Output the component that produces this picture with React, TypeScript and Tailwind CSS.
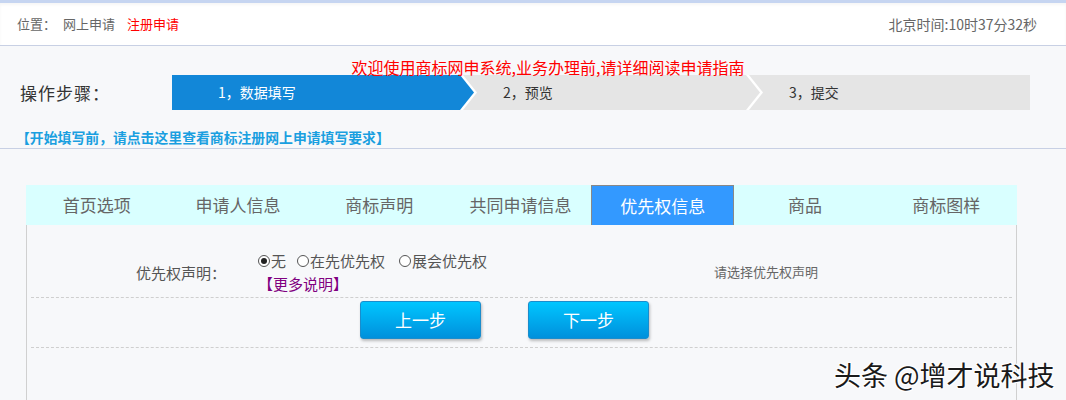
import React from 'react';

const font = { fontFamily: '"Noto Sans CJK SC", "Noto Sans", sans-serif' };

const tabs = ['首页选项', '申请人信息', '商标声明', '共同申请信息', '优先权信息', '商品', '商标图样'];

const steps = [
  { label: '1，数据填写', active: true, w: 'w-[288px] pl-[46px]' },
  { label: '2，预览', active: false, w: 'w-[286px] pl-[43px]' },
  { label: '3，提交', active: false, w: 'w-[284px] pl-[43px]' },
];

const Radio = ({ checked }: { checked?: boolean }) => (
  <span className="inline-flex items-center justify-center w-[12px] h-[12px] rounded-full border border-[#555] bg-white mr-[1px]">
    {checked && <span className="w-[6px] h-[6px] rounded-full bg-[#222]" />}
  </span>
);

const StepArrow = ({ fill }: { fill: string }) => (
  <svg className="absolute top-0 left-full z-10" width="18" height="35" viewBox="0 0 18 35">
    <polygon points="-2,0 3,0 17,17.5 3,35 -2,35" fill="#ffffff" />
    <polygon points="-2,0 0,0 14,17.5 0,35 -2,35" fill={fill} />
  </svg>
);

const App = () => {
  return (
    <div className="relative h-[400px] w-[1066px] overflow-hidden bg-[#f7f8fa]" style={font}>
      {/* Header */}
      <header className="h-[46px] bg-white border-t-[3px] border-t-[#c6d5f1] border-b border-b-[#c8d0e4] flex items-center justify-between pl-[17px] pr-[29px] text-[13px] text-[#666] shadow-[inset_0_2px_3px_rgba(0,0,0,0.04)]">
        <div className="flex items-center">
          <span>位置：</span>
          <span className="ml-[7px]">网上申请</span>
          <span className="ml-[12px] text-[#ff0000]">注册申请</span>
        </div>
        <span className="text-[14px]">北京时间:10时37分32秒</span>
      </header>

      {/* Steps */}
      <section className="h-[103px] border-b border-b-[#c8d0e4] pt-[12px]">
        <div className="h-[18px] leading-[18px] text-[16px] text-[#ff0000] text-center pl-[30px] relative z-20">
          欢迎使用商标网申系统,业务办理前,请详细阅读申请指南
        </div>
        <div className="flex items-center -mt-[1px]">
          <div className="w-[172px] pl-[20px] text-[17px] text-[#333] tracking-[1px]">操作步骤：</div>
          <div className="flex h-[35px] bg-[#e5e5e5]">
            {steps.map((s, i) => (
              <div
                key={s.label}
                className={`relative flex items-center h-full text-[14px] ${s.w} ${
                  s.active ? 'bg-[#1287d8] text-white' : 'text-[#333]'
                }`}
              >
                {s.label}
                {i < 2 && <StepArrow fill={s.active ? '#1287d8' : '#e5e5e5'} />}
              </div>
            ))}
          </div>
        </div>
        <div className="mt-[19px] pl-[16px] text-[13.85px] leading-[16px] font-bold text-[#1a9fe0]">
          【开始填写前，请点击这里查看商标注册网上申请填写要求】
        </div>
      </section>

      {/* Form panel */}
      <div className="pl-[26px] pt-[36px]">
        <div className="w-[991px] h-[40px] bg-[#d9ffff] flex">
          {tabs.map((t, i) =>
            i === 4 ? (
              <div
                key={t}
                className="flex-1 flex items-center justify-center bg-[#3399ff] border border-b-0 border-[#888] text-white text-[17px]"
              >
                {t}
              </div>
            ) : (
              <div key={t} className="flex-1 flex items-center justify-center text-[#666] text-[17px]">
                {t}
              </div>
            )
          )}
        </div>
        <div className="w-[991px] h-[200px] border-l border-r border-[#d0d0d0] px-[4px]">
          <div className="flex items-center pt-[24px] border-b border-dashed border-[#cfcfcf]">
            <div className="w-[195px] text-right text-[15px] text-[#555]">优先权声明：</div>
            <div className="ml-[32px] w-[456px] text-[15px] text-[#555]">
              <div className="flex items-center h-[24px]">
                <Radio checked />
                <span>无</span>
                <span className="ml-[11px]" />
                <Radio />
                <span>在先优先权</span>
                <span className="ml-[14px]" />
                <Radio />
                <span>展会优先权</span>
              </div>
              <div className="h-[24px] leading-[22px] text-[#800080]">【更多说明】</div>
            </div>
            <div className="text-[13px] text-[#666] -mt-[3px]">请选择优先权声明</div>
          </div>
          <div className="h-[50px] border-b border-dashed border-[#cfcfcf] flex items-start pt-[3px] pl-[329px] gap-[47px]">
            <button className="w-[121px] h-[38px] rounded-[3px] border border-[#1b8dcc] bg-gradient-to-b from-[#00c6ff] to-[#0090dc] text-white text-[17px] shadow-[1px_2px_3px_rgba(0,0,0,0.25)]">
              上一步
            </button>
            <button className="w-[121px] h-[38px] rounded-[3px] border border-[#1b8dcc] bg-gradient-to-b from-[#00c6ff] to-[#0090dc] text-white text-[17px] shadow-[1px_2px_3px_rgba(0,0,0,0.25)]">
              下一步
            </button>
          </div>
        </div>
      </div>

      {/* Watermark */}
      <div className="absolute left-[834px] top-[355px] text-[27px] text-[#1a1a1a] [text-shadow:1px_1px_0_#fff,-1px_-1px_0_#fff,1px_-1px_0_#fff,-1px_1px_0_#fff]">
        头条 @增才说科技
      </div>
    </div>
  );
};

export default App;
